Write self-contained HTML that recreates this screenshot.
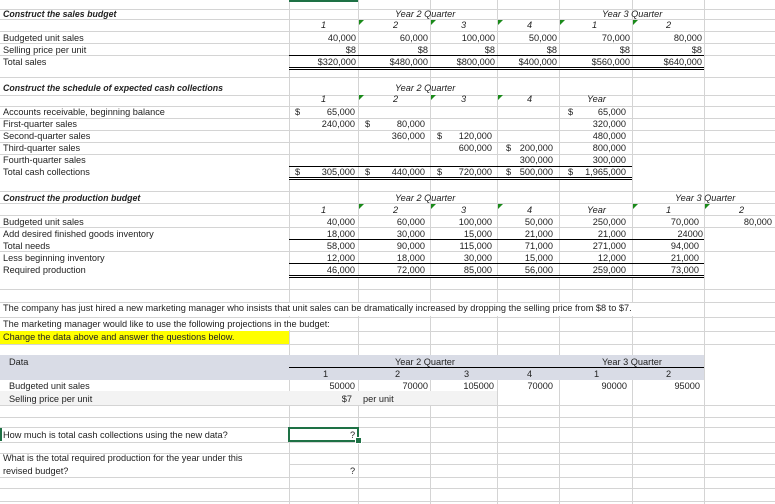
<!DOCTYPE html>
<html><head><meta charset="utf-8"><style>
body{margin:0;width:775px;height:504px;overflow:hidden;background:#fff;position:relative;font-family:"Liberation Sans",sans-serif}
.h{position:absolute;height:1px;background:#d4d4d4;left:0;width:775px}
.v{position:absolute;width:1px;background:#d4d4d4;top:0;height:504px}
.k{position:absolute;height:1px;background:#000}
.d{position:absolute;height:1px;border-top:1px solid #000;border-bottom:1px solid #000;background:#fff}
.t{position:absolute;font-size:9.2px;line-height:10px;color:#222;white-space:nowrap}
.r{text-align:right}
.i{font-style:italic}
.b{font-weight:bold;font-style:italic;font-size:8.8px}
.g{position:absolute;width:0;height:0;border-top:5px solid #1a8a1a;border-right:5px solid transparent}
</style></head><body>

<div class="h" style="top:9px"></div><div class="h" style="top:19px"></div><div class="h" style="top:31px"></div><div class="h" style="top:43px"></div><div class="h" style="top:55px"></div><div class="h" style="top:77px"></div><div class="h" style="top:95px"></div><div class="h" style="top:106px"></div><div class="h" style="top:118px"></div><div class="h" style="top:130px"></div><div class="h" style="top:142px"></div><div class="h" style="top:154px"></div><div class="h" style="top:191px"></div><div class="h" style="top:203px"></div><div class="h" style="top:215px"></div><div class="h" style="top:227px"></div><div class="h" style="top:251px"></div><div class="h" style="top:289px"></div><div class="h" style="top:302px"></div><div class="h" style="top:317px"></div><div class="h" style="top:331px"></div><div class="h" style="top:344px"></div><div class="h" style="top:405px"></div><div class="h" style="top:417px"></div><div class="h" style="top:427px"></div><div class="h" style="top:442px"></div><div class="h" style="top:453px"></div><div class="h" style="top:464px"></div><div class="h" style="top:477px"></div><div class="h" style="top:488px"></div><div class="h" style="top:501px"></div>

<div class="v" style="left:289px"></div><div class="v" style="left:358px"></div><div class="v" style="left:430px"></div><div class="v" style="left:497px"></div><div class="v" style="left:559px"></div><div class="v" style="left:632px"></div><div class="v" style="left:704px"></div>
<div style="position:absolute;left:0;top:355px;width:704px;height:25px;background:#d9dce6"></div>
<div style="position:absolute;left:0;top:391px;width:497px;height:14px;background:#f3f3f3"></div>
<div style="position:absolute;left:0;top:331px;width:289px;height:13px;background:#ffff00"></div>
<div style="position:absolute;left:0;top:303px;width:704px;height:13px;background:#fff"></div>
<div style="position:absolute;left:0;top:318px;width:358px;height:12px;background:#fff"></div>
<div style="position:absolute;left:0;top:455px;width:289px;height:21px;background:#fff"></div>

<div style="position:absolute;left:289px;top:0;width:69px;height:2px;background:#1e7145"></div>

<!-- sales budget -->
<div class="t b" style="left:3px;top:9px">Construct the sales budget</div>
<div class="t i" style="left:395px;top:9px">Year 2 Quarter</div>
<div class="t i" style="left:602px;top:9px">Year 3 Quarter</div>
<div class="t i" style="left:321px;top:20px">1</div><div class="t i" style="left:393px;top:20px">2</div><div class="t i" style="left:461px;top:20px">3</div><div class="t i" style="left:527px;top:20px">4</div><div class="t i" style="left:592px;top:20px">1</div><div class="t i" style="left:666px;top:20px">2</div>
<div class="g" style="left:359px;top:20px"></div><div class="g" style="left:431px;top:20px"></div><div class="g" style="left:498px;top:20px"></div><div class="g" style="left:560px;top:20px"></div><div class="g" style="left:633px;top:20px"></div>
<div class="t" style="left:3px;top:33px">Budgeted unit sales</div><div class="t" style="left:3px;top:45px">Selling price per unit</div><div class="t" style="left:3px;top:57px">Total sales</div>
<div class="t r" style="right:419px;top:33px">40,000</div><div class="t r" style="right:347px;top:33px">60,000</div><div class="t r" style="right:280px;top:33px">100,000</div><div class="t r" style="right:218px;top:33px">50,000</div><div class="t r" style="right:145px;top:33px">70,000</div><div class="t r" style="right:73px;top:33px">80,000</div>
<div class="t r" style="right:419px;top:45px">$8</div><div class="t r" style="right:347px;top:45px">$8</div><div class="t r" style="right:280px;top:45px">$8</div><div class="t r" style="right:218px;top:45px">$8</div><div class="t r" style="right:145px;top:45px">$8</div><div class="t r" style="right:73px;top:45px">$8</div>
<div class="t r" style="right:419px;top:57px">$320,000</div><div class="t r" style="right:347px;top:57px">$480,000</div><div class="t r" style="right:280px;top:57px">$800,000</div><div class="t r" style="right:218px;top:57px">$400,000</div><div class="t r" style="right:145px;top:57px">$560,000</div><div class="t r" style="right:73px;top:57px">$640,000</div>
<div class="k" style="left:289px;width:415px;top:55px"></div><div class="d" style="left:289px;width:415px;top:67px"></div>

<!-- cash -->
<div class="t b" style="left:3px;top:83px">Construct the schedule of expected cash collections</div>
<div class="t i" style="left:395px;top:83px">Year 2 Quarter</div>
<div class="t i" style="left:321px;top:94px">1</div><div class="t i" style="left:393px;top:94px">2</div><div class="t i" style="left:461px;top:94px">3</div><div class="t i" style="left:527px;top:94px">4</div><div class="t i" style="left:587px;top:94px">Year</div>
<div class="g" style="left:359px;top:95px"></div><div class="g" style="left:431px;top:95px"></div><div class="g" style="left:498px;top:95px"></div>
<div class="t" style="left:3px;top:107px">Accounts receivable, beginning balance</div><div class="t" style="left:3px;top:119px">First-quarter sales</div><div class="t" style="left:3px;top:131px">Second-quarter sales</div><div class="t" style="left:3px;top:143px">Third-quarter sales</div><div class="t" style="left:3px;top:155px">Fourth-quarter sales</div><div class="t" style="left:3px;top:167px">Total cash collections</div>
<div class="t" style="left:295px;top:107px">$</div><div class="t r" style="right:420px;top:107px">65,000</div>
<div class="t r" style="right:420px;top:119px">240,000</div><div class="t" style="left:365px;top:119px">$</div><div class="t r" style="right:350px;top:119px">80,000</div>
<div class="t r" style="right:350px;top:131px">360,000</div><div class="t" style="left:437px;top:131px">$</div><div class="t r" style="right:283px;top:131px">120,000</div>
<div class="t r" style="right:283px;top:143px">600,000</div><div class="t" style="left:506px;top:143px">$</div><div class="t r" style="right:222px;top:143px">200,000</div>
<div class="t r" style="right:222px;top:155px">300,000</div>
<div class="t" style="left:568px;top:107px">$</div>
<div class="t r" style="right:149px;top:107px">65,000</div><div class="t r" style="right:149px;top:119px">320,000</div><div class="t r" style="right:149px;top:131px">480,000</div><div class="t r" style="right:149px;top:143px">800,000</div><div class="t r" style="right:149px;top:155px">300,000</div>
<div class="t" style="left:295px;top:167px">$</div><div class="t r" style="right:420px;top:167px">305,000</div><div class="t" style="left:365px;top:167px">$</div><div class="t r" style="right:350px;top:167px">440,000</div><div class="t" style="left:437px;top:167px">$</div><div class="t r" style="right:283px;top:167px">720,000</div><div class="t" style="left:506px;top:167px">$</div><div class="t r" style="right:222px;top:167px">500,000</div><div class="t" style="left:568px;top:167px">$</div><div class="t r" style="right:149px;top:167px">1,965,000</div>
<div class="k" style="left:289px;width:343px;top:166px"></div><div class="d" style="left:289px;width:343px;top:177px"></div>

<!-- production -->
<div class="t b" style="left:3px;top:193px">Construct the production budget</div>
<div class="t i" style="left:395px;top:193px">Year 2 Quarter</div><div class="t i" style="left:675px;top:193px">Year 3 Quarter</div>
<div class="t i" style="left:321px;top:205px">1</div><div class="t i" style="left:393px;top:205px">2</div><div class="t i" style="left:461px;top:205px">3</div><div class="t i" style="left:527px;top:205px">4</div><div class="t i" style="left:587px;top:205px">Year</div><div class="t i" style="left:666px;top:205px">1</div><div class="t i" style="left:739px;top:205px">2</div>
<div class="g" style="left:359px;top:204px"></div><div class="g" style="left:431px;top:204px"></div><div class="g" style="left:498px;top:204px"></div><div class="g" style="left:633px;top:204px"></div><div class="g" style="left:705px;top:204px"></div>
<div class="t" style="left:3px;top:217px">Budgeted unit sales</div><div class="t" style="left:3px;top:229px">Add desired finished goods inventory</div><div class="t" style="left:3px;top:241px">Total needs</div><div class="t" style="left:3px;top:253px">Less beginning inventory</div><div class="t" style="left:3px;top:265px">Required production</div>
<div class="t r" style="right:420px;top:217px">40,000</div><div class="t r" style="right:350px;top:217px">60,000</div><div class="t r" style="right:283px;top:217px">100,000</div><div class="t r" style="right:222px;top:217px">50,000</div><div class="t r" style="right:149px;top:217px">250,000</div><div class="t r" style="right:76px;top:217px">70,000</div><div class="t r" style="right:3px;top:217px">80,000</div>
<div class="t r" style="right:420px;top:229px">18,000</div><div class="t r" style="right:350px;top:229px">30,000</div><div class="t r" style="right:283px;top:229px">15,000</div><div class="t r" style="right:222px;top:229px">21,000</div><div class="t r" style="right:149px;top:229px">21,000</div><div class="t r" style="right:72px;top:229px">24000</div>
<div class="t r" style="right:420px;top:241px">58,000</div><div class="t r" style="right:350px;top:241px">90,000</div><div class="t r" style="right:283px;top:241px">115,000</div><div class="t r" style="right:222px;top:241px">71,000</div><div class="t r" style="right:149px;top:241px">271,000</div><div class="t r" style="right:76px;top:241px">94,000</div>
<div class="t r" style="right:420px;top:253px">12,000</div><div class="t r" style="right:350px;top:253px">18,000</div><div class="t r" style="right:283px;top:253px">30,000</div><div class="t r" style="right:222px;top:253px">15,000</div><div class="t r" style="right:149px;top:253px">12,000</div><div class="t r" style="right:76px;top:253px">21,000</div>
<div class="t r" style="right:420px;top:265px">46,000</div><div class="t r" style="right:350px;top:265px">72,000</div><div class="t r" style="right:283px;top:265px">85,000</div><div class="t r" style="right:222px;top:265px">56,000</div><div class="t r" style="right:149px;top:265px">259,000</div><div class="t r" style="right:76px;top:265px">73,000</div>
<div class="k" style="left:289px;width:415px;top:239px"></div><div class="k" style="left:289px;width:415px;top:263px"></div><div class="d" style="left:289px;width:415px;top:275px"></div>

<div class="t" style="left:3px;top:303px">The company has just hired a new marketing manager who insists that unit sales can be dramatically increased by dropping the selling price from $8 to $7.</div>
<div class="t" style="left:3px;top:319px">The marketing manager would like to use the following projections in the budget:</div>
<div class="t" style="left:3px;top:332px">Change the data above and answer the questions below.</div>

<!-- data -->
<div class="t" style="left:9px;top:357px">Data</div>
<div class="t" style="left:395px;top:357px">Year 2 Quarter</div><div class="t" style="left:602px;top:357px">Year 3 Quarter</div>
<div class="k" style="left:289px;width:415px;top:367px"></div>
<div class="t" style="left:323px;top:369px">1</div><div class="t" style="left:395px;top:369px">2</div><div class="t" style="left:464px;top:369px">3</div><div class="t" style="left:527px;top:369px">4</div><div class="t" style="left:594px;top:369px">1</div><div class="t" style="left:666px;top:369px">2</div>
<div class="t" style="left:9px;top:381px">Budgeted unit sales</div>
<div class="t r" style="right:420px;top:381px">50000</div><div class="t r" style="right:347px;top:381px">70000</div><div class="t r" style="right:281px;top:381px">105000</div><div class="t r" style="right:222px;top:381px">70000</div><div class="t r" style="right:148px;top:381px">90000</div><div class="t r" style="right:75px;top:381px">95000</div>
<div class="t" style="left:9px;top:394px">Selling price per unit</div><div class="t r" style="right:423px;top:394px">$7</div><div class="t" style="left:363px;top:394px">per unit</div>

<div style="position:absolute;left:0;top:428px;width:2px;height:13px;background:#1e7145"></div>
<div class="t" style="left:3px;top:430px">How much is total cash collections using the new data?</div>
<div style="position:absolute;left:288px;top:427px;width:71px;height:15px;box-sizing:border-box;border:2px solid #1e7145"></div>
<div style="position:absolute;left:355px;top:437px;width:5px;height:5px;background:#1e7145;border:1px solid #fff"></div>
<div class="t" style="left:350px;top:430px">?</div>
<div class="t" style="left:3px;top:453px">What is the total required production for the year under this</div>
<div class="t" style="left:3px;top:466px">revised budget?</div>
<div class="t" style="left:350px;top:466px">?</div>
</body></html>
